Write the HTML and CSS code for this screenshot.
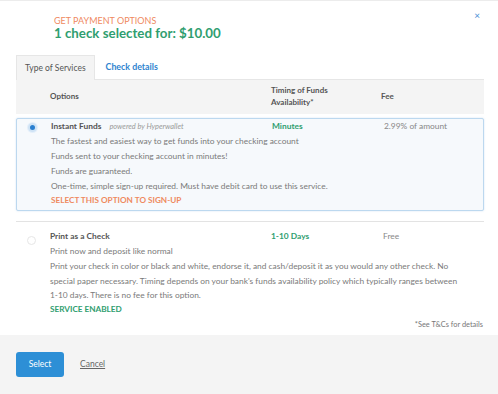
FILE: index.html
```html
<!DOCTYPE html>
<html>
<head>
<meta charset="utf-8">
<link rel="stylesheet" href="styles.css">
</head>
<body>
<div class="modal">
  <div class="content">
    <button class="close" aria-label="Close">×</button>
    <div class="head">
      <div class="eyebrow">GET PAYMENT OPTIONS</div>
      <div class="title">1 check selected for: $10.00</div>
    </div>
    <div class="tabs">
      <div class="tab active">Type of Services</div>
      <div class="tab link">Check details</div>
    </div>
    <div class="thead row">
      <div></div>
      <div>Options</div>
      <div>Timing of Funds<br>Availability*</div>
      <div class="fee-h">Fee</div>
    </div>
    <div class="option selected row">
      <div class="radio-cell"><span class="radio on"></span></div>
      <div class="desc">
        <div class="name">Instant Funds <em>powered by Hyperwallet</em></div>
        <div class="line wide">The fastest and easiest way to get funds into your checking account</div>
        <div class="line">Funds sent to your checking account in minutes!</div>
        <div class="line">Funds are guaranteed.</div>
        <div class="line wide">One-time, simple sign-up required. Must have debit card to use this service.</div>
        <div class="cta orange">SELECT THIS OPTION TO SIGN-UP</div>
      </div>
      <div class="timing">Minutes</div>
      <div class="fee">2.99% of amount</div>
    </div>
    <div class="option plain row">
      <div class="radio-cell"><span class="radio"></span></div>
      <div class="desc">
        <div class="name">Print as a Check</div>
        <div class="line">Print now and deposit like normal</div>
        <div class="line para">Print your check in color or black and white, endorse it, and cash/deposit it as you would any other check. No special paper necessary. Timing depends on your bank's funds availability policy which typically ranges between 1&#8209;10 days. There is no fee for this option.</div>
        <div class="cta green">SERVICE ENABLED</div>
      </div>
      <div class="timing">1-10 Days</div>
      <div class="fee">Free</div>
    </div>
    <div class="note">*See T&amp;Cs for details</div>
  </div>
  <div class="footer">
    <button class="btn">Select</button>
    <a class="cancel" href="#">Cancel</a>
  </div>
</div>
</body>
</html>
```
FILE: styles.css
```css
* { box-sizing: border-box; }
html, body { margin: 0; padding: 0; background: #fff; }
body {
  font-family: Lato, "Open Sans", sans-serif;
  color: #555;
  width: 498px;
  height: 394px;
  overflow: hidden;
}
.modal {
  display: flex;
  flex-direction: column;
  height: 394px;
  border-top: 1px solid #ececec;
}
.content {
  position: relative;
  padding: 14px 14px 0 16px;
  flex: 1;
}
.close {
  position: absolute;
  top: 9px;
  right: 18px;
  border: 0;
  background: none;
  color: #4a8fd6;
  font-size: 10px;
  line-height: 10px;
  padding: 0;
  font-family: Lato, sans-serif;
}
.head { padding-left: 38px; }
.eyebrow {
  color: #ef8a5f;
  font-size: 9px;
  line-height: 11px;
}
.title {
  color: #2f9e6f;
  font-size: 13.3px;
  font-weight: 700;
  line-height: 14px;
}
.tabs {
  display: flex;
  margin-top: 15px;
  height: 25px;
  border-bottom: 1px solid #e6e6e6;
}
.tab {
  font-size: 8.5px;
  line-height: 24px;
  padding: 0 9px;
  font-weight: 700;
}
.tab.active {
  background: #f4f4f4;
  border: 1px solid #e6e6e6;
  border-bottom: 0;
  color: #555;
  padding: 0 8px;
  font-weight: 400;
  margin-bottom: -1px;
}
.tab.link { color: #2e84cf; padding-left: 11px; font-size: 8.8px; }
.row {
  display: grid;
  grid-template-columns: 34px 221px 110px 1fr;
}
.thead {
  background: #f4f4f4;
  font-size: 8px;
  font-weight: 700;
  color: #555;
  line-height: 12px;
  padding: 3px 0 5px;
  height: 34px;
  align-items: center;
}
.option { font-size: 8.4px; line-height: 15px; }
.selected {
  margin-top: 4px;
  border: 1px solid #bcd8ef;
  background: #f6f9fc;
  border-radius: 2px;
  padding: 0 0 3px;
  box-shadow: 0 0 2px rgba(120,170,220,0.35);
}
.plain {
  margin-top: 10px;
  border-top: 1px solid #e3e3e3;
  padding-top: 7px;
}
.radio-cell { padding-left: 11px; padding-top: 3px; }
.radio {
  display: inline-block;
  width: 9px;
  height: 9px;
  border-radius: 50%;
  border: 1px solid #e6e6e6;
  background: #fff;
}
.radio.on {
  border: 2px solid #cfe3f5;
  background: #2a7fd0;
  box-shadow: 0 0 0 1px #e4effa;
}
.plain .radio-cell { padding-top: 6px; }
.desc { color: #7a7a7a; }
.name { font-weight: 700; color: #555; }
.name em { font-weight: 400; color: #999; font-size: 7.4px; margin-left: 6px; }
.line.wide { margin-right: -215px; }
.para { line-height: 14.5px; margin-right: -195px; }
.cta { font-weight: 700; font-size: 8.2px; line-height: 13px; }
.cta.orange { color: #ef8a5f; }
.cta.green { color: #2f9e6f; }
.timing { color: #2f9e6f; font-weight: 700; }
.fee { color: #888; padding-left: 2px; }
.note {
  text-align: right;
  font-size: 7.4px;
  color: #777;
  margin-top: 4px;
  padding-right: 1px;
}
.footer {
  background: #f4f4f4;
  height: 59px;
  display: flex;
  align-items: center;
  gap: 16px;
  padding: 0 16px 1px;
}
.btn {
  background: #2d8fd6;
  color: #fff;
  border: 0;
  border-radius: 3px;
  width: 48px;
  height: 25px;
  font-family: Lato, sans-serif;
  font-size: 8.5px;
  padding: 0;
}
.cancel {
  color: #666;
  font-size: 8.5px;
  text-decoration: underline;
}
```
